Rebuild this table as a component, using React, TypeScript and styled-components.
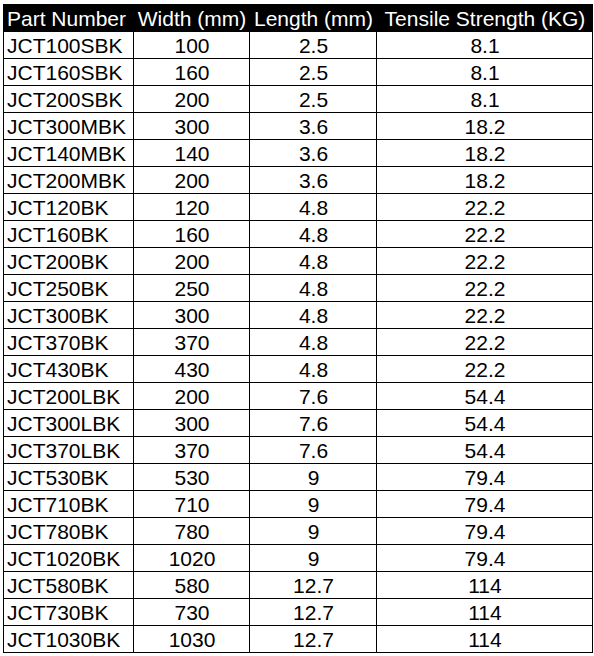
import React from 'react'
import styled, { createGlobalStyle } from 'styled-components'

const GlobalStyle = createGlobalStyle`
  html, body {
    margin: 0;
    padding: 0;
    background: #ffffff;
  }
`

const Wrapper = styled.div`
  padding: 4px 0 0 3px;
`

const Table = styled.table`
  border-collapse: collapse;
  table-layout: fixed;
  width: 589px;
  font-family: "Liberation Sans", Arial, sans-serif;
  font-size: 21px;
  color: #000;
  border: 1px solid #000;
`

const HeadCell = styled.th<{ $left?: boolean }>`
  background: #000;
  color: #fff;
  font-weight: normal;
  height: 25px;
  padding: 1px 2px 0 3px;
  line-height: 24px;
  text-align: ${p => (p.$left ? 'left' : 'center')};
  white-space: nowrap;
  border: 1px solid #000;
`

const Cell = styled.td<{ $left?: boolean }>`
  height: 25px;
  padding: 1px 2px 0 3px;
  line-height: 24px;
  text-align: ${p => (p.$left ? 'left' : 'center')};
  white-space: nowrap;
  border: 1px solid #000;
`

const rows: [string, string, string, string][] = [
  ['JCT100SBK', '100', '2.5', '8.1'],
  ['JCT160SBK', '160', '2.5', '8.1'],
  ['JCT200SBK', '200', '2.5', '8.1'],
  ['JCT300MBK', '300', '3.6', '18.2'],
  ['JCT140MBK', '140', '3.6', '18.2'],
  ['JCT200MBK', '200', '3.6', '18.2'],
  ['JCT120BK', '120', '4.8', '22.2'],
  ['JCT160BK', '160', '4.8', '22.2'],
  ['JCT200BK', '200', '4.8', '22.2'],
  ['JCT250BK', '250', '4.8', '22.2'],
  ['JCT300BK', '300', '4.8', '22.2'],
  ['JCT370BK', '370', '4.8', '22.2'],
  ['JCT430BK', '430', '4.8', '22.2'],
  ['JCT200LBK', '200', '7.6', '54.4'],
  ['JCT300LBK', '300', '7.6', '54.4'],
  ['JCT370LBK', '370', '7.6', '54.4'],
  ['JCT530BK', '530', '9', '79.4'],
  ['JCT710BK', '710', '9', '79.4'],
  ['JCT780BK', '780', '9', '79.4'],
  ['JCT1020BK', '1020', '9', '79.4'],
  ['JCT580BK', '580', '12.7', '114'],
  ['JCT730BK', '730', '12.7', '114'],
  ['JCT1030BK', '1030', '12.7', '114'],
]

const App: React.FC = () => {
  return (
    <>
      <GlobalStyle />
      <Wrapper>
        <Table>
          <colgroup>
            <col style={{ width: 130 }} />
            <col style={{ width: 116 }} />
            <col style={{ width: 127 }} />
            <col style={{ width: 216 }} />
          </colgroup>
          <thead>
            <tr>
              <HeadCell $left>Part Number</HeadCell>
              <HeadCell>Width (mm)</HeadCell>
              <HeadCell>Length (mm)</HeadCell>
              <HeadCell>Tensile Strength (KG)</HeadCell>
            </tr>
          </thead>
          <tbody>
            {rows.map(r => (
              <tr key={r[0]}>
                <Cell $left>{r[0]}</Cell>
                <Cell>{r[1]}</Cell>
                <Cell>{r[2]}</Cell>
                <Cell>{r[3]}</Cell>
              </tr>
            ))}
          </tbody>
        </Table>
      </Wrapper>
    </>
  )
}

export default App
